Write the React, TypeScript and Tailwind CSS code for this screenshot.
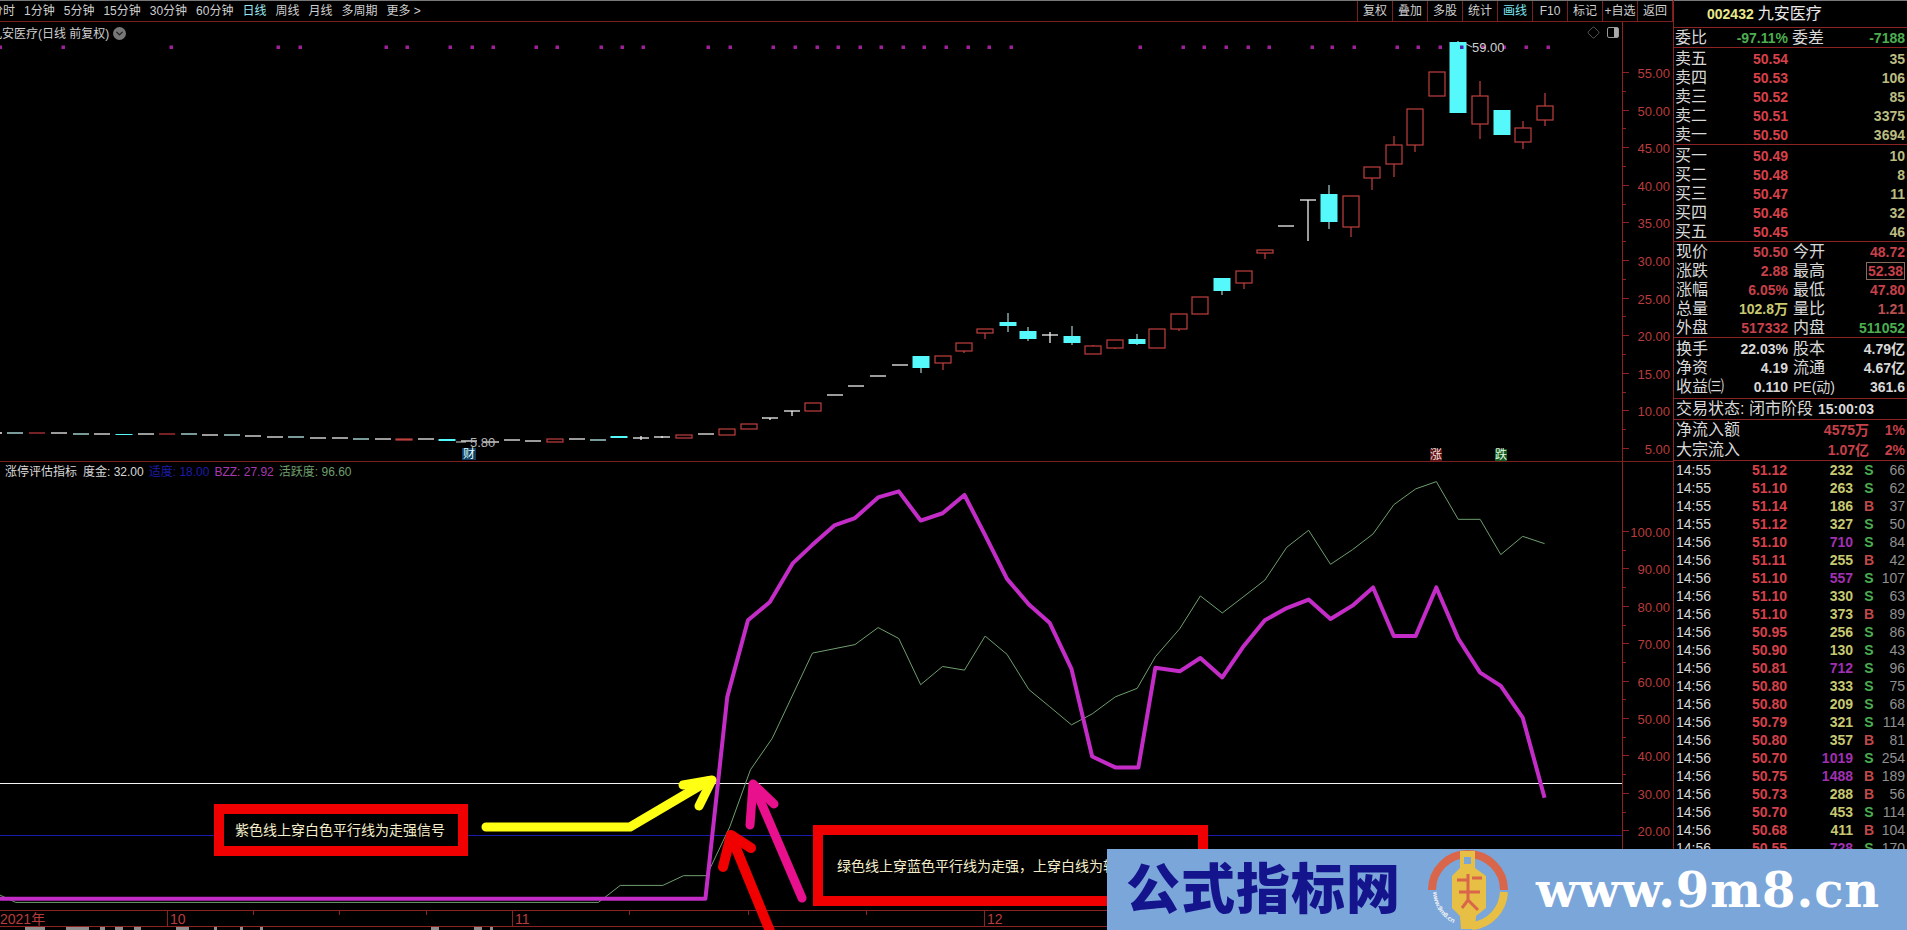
import { ChevronDown, Diamond } from "lucide-react";

const s = 1907 / 1568;

type Candle = [number, number, number, number, number, "r" | "c" | "w"];

const flatCandles: Candle[] = [
  [-6, 433, 433, 433, 433, "w"], [15, 433, 433, 433, 433, "c"], [37, 433, 433, 433, 433, "r"],
  [59, 433, 433, 433, 433, "w"], [81, 434, 434, 434, 434, "c"], [102, 434, 434, 434, 434, "w"],
  [124, 434, 435, 434, 435, "c"], [146, 434, 434, 434, 434, "w"], [167, 434, 434, 434, 434, "r"],
  [189, 434, 434, 434, 434, "c"], [210, 435, 435, 435, 435, "w"], [232, 435, 435, 435, 435, "c"],
  [253, 436, 436, 436, 436, "w"], [275, 437, 437, 437, 437, "w"], [296, 437, 437, 437, 437, "c"],
  [318, 438, 438, 438, 438, "w"], [340, 438, 438, 438, 438, "w"], [361, 439, 439, 439, 439, "c"],
  [383, 439, 439, 439, 439, "w"], [404, 439, 440, 439, 440, "r"], [426, 439, 439, 439, 439, "w"],
  [447, 439, 441, 439, 441, "c"], [469, 441, 441, 441, 441, "w"], [491, 442, 442, 442, 442, "w"],
  [512, 440, 440, 440, 440, "w"], [533, 441, 441, 441, 441, "w"], [555, 439, 442, 439, 442, "r"],
  [577, 439, 439, 439, 439, "w"], [598, 440, 440, 440, 440, "c"], [619, 436, 438, 436, 438, "c"],
  [641, 438, 438, 436, 440, "w"], [662, 437, 437, 436, 438, "w"], [684, 435, 438, 435, 438, "r"],
  [706, 434, 434, 434, 434, "w"], [727, 429, 435, 429, 435, "r"], [749, 424, 429, 424, 429, "r"],
  [770, 418, 418, 418, 420, "w"], [792, 411, 411, 411, 416, "w"], [813, 403, 411, 403, 411, "r"],
  [835, 395, 395, 395, 395, "w"], [856, 386, 386, 386, 386, "w"], [878, 376, 376, 376, 376, "w"],
];

const candles: Candle[] = [
  ...flatCandles,
  [900, 365, 365, 365, 365, "w"],
  [921, 356, 368, 356, 373, "c"],
  [943, 356, 363, 356, 370, "r"],
  [964, 343, 351, 343, 353, "r"],
  [985, 329, 333, 329, 339, "r"],
  [1008, 322, 326, 313, 332, "c"],
  [1028, 331, 339, 327, 341, "c"],
  [1050, 335, 335, 332, 343, "w"],
  [1072, 336, 343, 326, 345, "c"],
  [1093, 346, 354, 345, 354, "r"],
  [1115, 340, 348, 340, 349, "r"],
  [1137, 339, 344, 334, 345, "c"],
  [1157, 329, 348, 329, 348, "r"],
  [1179, 314, 329, 314, 331, "r"],
  [1200, 297, 314, 297, 314, "r"],
  [1222, 278, 291, 278, 295, "c"],
  [1244, 271, 283, 271, 289, "r"],
  [1265, 250, 253, 250, 259, "r"],
  [1286, 226, 226, 226, 226, "w"],
  [1308, 200, 200, 200, 241, "w"],
  [1329, 194, 222, 185, 229, "c"],
  [1351, 196, 227, 196, 237, "r"],
  [1372, 167, 178, 167, 190, "r"],
  [1394, 145, 164, 136, 177, "r"],
  [1415, 109, 145, 109, 152, "r"],
  [1437, 72, 96, 72, 96, "r"],
  [1458, 42, 113, 41, 113, "c"],
  [1480, 96, 124, 81, 139, "r"],
  [1502, 110, 135, 110, 135, "c"],
  [1523, 128, 142, 121, 149, "r"],
  [1545, 106, 120, 93, 126, "r"],
];

const dots = [
  0, 63, 171, 278, 300, 386, 407, 450, 472, 493, 536, 557, 601, 622, 643, 708, 730, 773, 795, 817, 838, 860, 881,
  903, 924, 946, 968, 989, 1011, 1140, 1183, 1204, 1226, 1248, 1269, 1312, 1332, 1354, 1397, 1418, 1440, 1462, 1483,
  1504, 1526, 1548,
];

const purpleLine = [
  [0, 739], [580, 739], [598, 573], [615, 510], [633, 495], [652, 463], [668, 448], [686, 432], [703, 426], [722, 409],
  [739, 404], [757, 428], [775, 422], [793, 407], [810, 440], [828, 476], [846, 497], [863, 512], [881, 550], [898, 622],
  [917, 631], [936, 631], [950, 549], [970, 552], [987, 541], [1005, 557], [1022, 532], [1040, 510], [1058, 500],
  [1076, 493], [1094, 509], [1112, 498], [1129, 483], [1146, 523], [1164, 523], [1181, 483], [1199, 525], [1217, 553],
  [1234, 564], [1252, 590], [1270, 656],
];

const greenLine = [
  [0, 736], [13, 742], [492, 742], [510, 728], [545, 728], [562, 720], [581, 720], [600, 680], [617, 633], [635, 607],
  [668, 537], [703, 530], [722, 516], [739, 525], [757, 563], [775, 548], [793, 551], [810, 523], [828, 538], [846, 567],
  [863, 581], [881, 596], [898, 587], [917, 573], [935, 566], [950, 540], [970, 517], [987, 490], [1005, 504], [1022, 491],
  [1040, 477], [1058, 450], [1076, 436], [1094, 464], [1112, 452], [1129, 439], [1146, 415], [1164, 402], [1181, 396],
  [1199, 427], [1217, 427], [1234, 456], [1252, 441], [1270, 447],
];

const toPoints = (pts: number[][]) => pts.map(([x, y]) => `${x * s},${y * s}`).join(" ");

const priceAxis = [55, 50, 45, 40, 35, 30, 25, 20, 15, 10, 5];
const indicatorAxis = [100, 90, 80, 70, 60, 50, 40, 30, 20];
const dateTicks = [253, 339, 426, 629, 748, 866];
const tabMarks = [
  [25, 20], [66, 23], [100, 5], [115, 8], [134, 7], [176, 13], [214, 3], [240, 3], [260, 3], [431, 8], [474, 8], [490, 3],
];

const toolbarLeft = ["分时", "1分钟", "5分钟", "15分钟", "30分钟", "60分钟", "日线", "周线", "月线", "多周期", "更多 >"];
const toolbarRight = ["复权", "叠加", "多股", "统计", "画线", "F10", "标记", "+自选", "返回"];

const sells = [
  ["卖五", "50.54", "35"],
  ["卖四", "50.53", "106"],
  ["卖三", "50.52", "85"],
  ["卖二", "50.51", "3375"],
  ["卖一", "50.50", "3694"],
];
const buys = [
  ["买一", "50.49", "10"],
  ["买二", "50.48", "8"],
  ["买三", "50.47", "11"],
  ["买四", "50.46", "32"],
  ["买五", "50.45", "46"],
];

const trades: [string, string, string, string, string][] = [
  ["14:55", "51.12", "232", "S", "66"],
  ["14:55", "51.10", "263", "S", "62"],
  ["14:55", "51.14", "186", "B", "37"],
  ["14:55", "51.12", "327", "S", "50"],
  ["14:56", "51.10", "710", "S", "84"],
  ["14:56", "51.11", "255", "B", "42"],
  ["14:56", "51.10", "557", "S", "107"],
  ["14:56", "51.10", "330", "S", "63"],
  ["14:56", "51.10", "373", "B", "89"],
  ["14:56", "50.95", "256", "S", "86"],
  ["14:56", "50.90", "130", "S", "43"],
  ["14:56", "50.81", "712", "S", "96"],
  ["14:56", "50.80", "333", "S", "75"],
  ["14:56", "50.80", "209", "S", "68"],
  ["14:56", "50.79", "321", "S", "114"],
  ["14:56", "50.80", "357", "B", "81"],
  ["14:56", "50.70", "1019", "S", "254"],
  ["14:56", "50.75", "1488", "B", "189"],
  ["14:56", "50.73", "288", "B", "56"],
  ["14:56", "50.70", "453", "S", "114"],
  ["14:56", "50.68", "411", "B", "104"],
  ["14:56", "50.55", "728", "S", "170"],
];

function CandleMark({ c }: { c: Candle }) {
  const [x, top, bottom, high, low, kind] = c;
  if (kind === "w" || top === bottom) {
    const color = kind === "r" ? "#b8323a" : kind === "c" ? "#bdeeee" : "#f0f0f0";
    return (
      <g stroke={color} strokeWidth="1.3">
        <line x1={x - 8} x2={x + 8} y1={top} y2={top} />
        {low > high && <line x1={x} x2={x} y1={high} y2={low} />}
      </g>
    );
  }
  if (kind === "c") {
    return (
      <g>
        <line x1={x} x2={x} y1={high} y2={low} stroke="#c8f8f8" strokeWidth="1" />
        <rect x={x - 8.5} y={top} width="17" height={bottom - top} fill="#55f8fb" />
      </g>
    );
  }
  return (
    <g stroke="#c0403e" strokeWidth="1.2">
      <line x1={x} x2={x} y1={high} y2={top} />
      <line x1={x} x2={x} y1={bottom} y2={low} />
      <rect x={x - 8} y={top} width="16" height={bottom - top} fill="#000" />
    </g>
  );
}

function Axis({ top, height, labels, y0, step, decimals }: { top: number; height: number; labels: number[]; y0: number; step: number; decimals: number }) {
  return (
    <svg width="50" height={height} viewBox={`1622 ${top} 50 ${height}`} className="block">
      {labels.map((v, i) => {
        const y = Math.round(y0 + i * step) + 0.5;
        const half = Math.round(y0 + (i + 0.5) * step) + 0.5;
        return (
          <g key={v}>
            <line x1="1622" x2="1628" y1={y} y2={y} stroke="#8c2222" />
            <line x1="1622" x2="1625" y1={half} y2={half} stroke="#8c2222" />
            <text x="1669" y={y + 5} textAnchor="end" fontSize="13" fill="#b93c3c">
              {v.toFixed(decimals)}
            </text>
          </g>
        );
      })}
    </svg>
  );
}

function QuoteRow({ label, price, vol }: { label: string; price: string; vol: string }) {
  return (
    <div className="flex h-[19px] items-center">
      <div className="flex w-[114px] items-center justify-between pl-[1px]">
        <span className="text-[16px] text-[#d8d8d8]">{label}</span>
        <span className="text-[14px] font-bold text-[#d8404a]">{price}</span>
      </div>
      <span className="flex-1 pr-[2px] text-right text-[14px] font-bold text-[#bcbc80]">{vol}</span>
    </div>
  );
}

function StatRow({ a, b, c, d, bClass, dClass }: { a: React.ReactNode; b: string; c: React.ReactNode; d: React.ReactNode; bClass: string; dClass: string }) {
  return (
    <div className="flex h-[19px] items-center whitespace-nowrap">
      <div className="flex w-[114px] items-center justify-between pl-[2px]">
        <span className="text-[16px] text-[#d8d8d8]">{a}</span>
        <span className={`text-[14px] font-bold ${bClass}`}>{b}</span>
      </div>
      <span className="ml-[5px] text-[16px] text-[#d8d8d8]">{c}</span>
      <span className={`ml-auto pr-[2px] text-right text-[14px] font-bold ${dClass}`}>{d}</span>
    </div>
  );
}

function MoneyRow({ label, amount, pct }: { label: string; amount: string; pct: string }) {
  return (
    <div className="flex h-[20px] items-center whitespace-nowrap pl-[2px]">
      <span className="text-[16px] text-[#d8d8d8]">{label}</span>
      <span className="ml-auto w-[60px] text-right text-[14px] font-bold text-[#c8404a]">{amount}</span>
      <span className="w-[38px] pr-[2px] text-right text-[14px] font-bold text-[#c8404a]">{pct}</span>
    </div>
  );
}

function Logo() {
  return (
    <svg width="80" height="80" viewBox="0 0 80 80" className="block shrink-0">
      <path id="logo-lower" d="M5 42 A35 35 0 0 0 38 76" fill="none" />
      <path d="M4 40 A36 36 0 0 1 76 40" fill="none" stroke="#d9654a" strokeWidth="8" />
      <path d="M76 42 A36 36 0 0 1 44 76" fill="none" stroke="#e8bf45" strokeWidth="8" />
      <polygon points="32,1 47,1 47,18 58,26 58,58 48,66 47,79 33,79 32,66 24,58 24,26 32,18" fill="#e8bf45" />
      <rect x="36" y="7" width="7" height="7" fill="#7ba6d9" />
      <path d="M29 30 H40 M40 24 V50 M31 42 H52 M34 58 L40 50 L50 60 M44 28 H54" stroke="#d9654a" strokeWidth="3" fill="none" />
      <text fontSize="6.5" fill="#f4f4f4" fontWeight="700">
        <textPath href="#logo-lower">www.9m8.cn</textPath>
      </text>
    </svg>
  );
}

export default function App() {
  return (
    <div className="relative h-[930px] w-[1907px] overflow-hidden bg-black font-[Liberation_Sans,Noto_Sans_CJK_SC,sans-serif] text-[12px] leading-none text-[#cfcfcf]">
      <div className="flex h-full">
        {/* chart column */}
        <div className="flex w-[1673px] shrink-0 flex-col">
          {/* toolbar */}
          <div className="flex h-[22px] shrink-0 items-center justify-between overflow-hidden border-t border-b border-t-[#777] border-b-[#7a1f1f]">
            <div className="-ml-[9px] flex gap-[9px] whitespace-nowrap">
              {toolbarLeft.map((t) => (
                <span key={t} className={t === "日线" ? "text-[#9be8f0]" : ""}>
                  {t}
                </span>
              ))}
            </div>
            <div className="flex h-full">
              {toolbarRight.map((t) => (
                <span
                  key={t}
                  className={`flex w-[35px] items-center justify-center border-l border-[#7a1f1f] ${t === "画线" ? "text-[#7fe6f0]" : ""}`}
                >
                  {t}
                </span>
              ))}
              <span className="w-px bg-[#7a1f1f]" />
            </div>
          </div>

          {/* price chart */}
          <div className="flex h-[440px] shrink-0 border-b border-[#7a1f1f]">
            <div className="relative w-[1622px] shrink-0 overflow-hidden">
              <svg width="1622" height="440" viewBox="0 22 1622 440" className="block">
                {dots.map((x) => (
                  <rect key={x} x={x - 1.5} y="45.5" width="3.5" height="3.5" fill="#a0209c" />
                ))}
                {candles.map((c) => (
                  <CandleMark key={c[0]} c={c} />
                ))}
                <line x1="1466" x2="1472" y1="44" y2="47" stroke="#cfcfcf" />
                <line x1="456" x2="466" y1="442" y2="442" stroke="#cfcfcf" />
                <rect x="1460" y="45.5" width="3.5" height="3.5" fill="#5020b0" />
              </svg>
              <div className="absolute left-[14px] top-[5px] flex items-center gap-[4px] whitespace-nowrap">
                <span className="-ml-[24px]">九安医疗(日线 前复权)</span>
                <span className="flex h-[13px] w-[13px] items-center justify-center rounded-full bg-[#777]">
                  <ChevronDown size={11} strokeWidth={3} className="text-[#222]" />
                </span>
              </div>
              <span className="absolute left-[1472px] top-[19px] text-[13px] text-[#cfcfcf]">59.00</span>
              <span className="absolute left-[470px] top-[414px] text-[13px] text-[#b5b5b5]">5.80</span>
              <span className="absolute left-[462px] top-[426px] bg-[#123c60] px-px text-[12px] text-[#dff]">财</span>
              <span className="absolute left-[1430px] top-[427px] bg-[#5a1414] text-[12px] text-[#f4dede]">涨</span>
              <span className="absolute left-[1495px] top-[427px] bg-[#0f5a1e] text-[12px] text-[#e2f6e2]">跌</span>
              <Diamond size={13} strokeWidth={1} className="absolute left-[1587px] top-[4px] text-[#999]" />
              <span className="absolute left-[1607px] top-[5px] flex h-[11px] w-[12px] justify-end rounded-[2px] border border-[#999]">
                <span className="w-[4px] bg-[#aaa]" />
              </span>
            </div>
            <div className="w-[51px] shrink-0 border-l border-[#8c2222]">
              <Axis top={22} height={439} labels={priceAxis} y0={72} step={37.6} decimals={2} />
            </div>
          </div>

          {/* indicator chart */}
          <div className="flex h-[448px] shrink-0">
            <div className="relative w-[1622px] shrink-0 overflow-hidden">
              <svg width="1622" height="448" viewBox="0 462 1622 448" className="block">
                <line x1="0" x2="1622" y1="783.5" y2="783.5" stroke="#f4f4f4" />
                <line x1="0" x2="1622" y1="835.5" y2="835.5" stroke="#1a1aa8" />
                <polyline points={toPoints(greenLine)} fill="none" stroke="#6f9f6f" strokeWidth="1" />
                <polyline points={toPoints(purpleLine)} fill="none" stroke="#c42cc8" strokeWidth="4" strokeLinejoin="round" />
              </svg>
              <div className="absolute left-0 top-[4px] flex gap-[5px] whitespace-nowrap text-[12px]">
                <span className="ml-[5px] text-[#d8d8d8]">涨停评估指标</span>
                <span className="ml-[1px] text-[#d8d8d8]">度金: 32.00</span>
                <span className="text-[#1c1ca8]">适度: 18.00</span>
                <span className="text-[#a838b0]">BZZ: 27.92</span>
                <span className="text-[#6f9f6f]">活跃度: 96.60</span>
              </div>
              <div className="absolute left-[214px] top-[342px] flex h-[52px] w-[254px] items-center border-10 border-[#f00000] bg-black pl-[11px] text-[14px] text-[#f4eecb]">
                紫色线上穿白色平行线为走强信号
              </div>
              <div className="absolute left-[813px] top-[363px] flex h-[81px] w-[395px] items-center whitespace-nowrap border-10 border-[#f00000] bg-black pl-[14px] text-[14px] text-[#f4eecb]">
                绿色线上穿蓝色平行线为走强，上穿白线为转强信号
              </div>
            </div>
            <div className="w-[51px] shrink-0 border-l border-[#8c2222]">
              <Axis top={462} height={448} labels={indicatorAxis} y0={531} step={37.4} decimals={2} />
            </div>
          </div>

          {/* date axis */}
          <div className="relative h-[17px] shrink-0 border-y border-[#8c2222] text-[#b93c3c]">
            <span className="absolute left-0 top-[1px] text-[14px]">2021年</span>
            <span className="absolute left-[167px] top-0 h-full border-l border-[#8c2222] pl-[2px] pt-[1px] text-[14px]">10</span>
            <span className="absolute left-[512px] top-0 h-full border-l border-[#8c2222] pl-[2px] pt-[1px] text-[14px]">11</span>
            <span className="absolute left-[984px] top-0 h-full border-l border-[#8c2222] pl-[2px] pt-[1px] text-[14px]">12</span>
            <svg width="1622" height="4" viewBox="0 0 1622 4" className="absolute left-0 top-0">
              {dateTicks.map((x) => (
                <line key={x} x1={x + 0.5} x2={x + 0.5} y1="0" y2="4" stroke="#8c2222" />
              ))}
            </svg>
          </div>

          {/* tab strip, only its top edge is in frame */}
          <svg width="1107" height="3" viewBox="0 0 1107 3" className="block shrink-0">
            {tabMarks.map(([x, w]) => (
              <rect key={x} x={x} y="0" width={w} height="3" fill="#8f8f8f" />
            ))}
          </svg>
        </div>

        {/* quote panel */}
        <div className="flex h-full min-w-0 flex-1 flex-col border-l border-[#8c2222] whitespace-nowrap">
          <div className="flex h-[28px] shrink-0 items-center border-y border-t-[#777] border-b-[#8c2222] pl-[33px]">
            <span className="text-[14px] font-bold text-[#e8e88c]">002432</span>
            <span className="ml-[4px] text-[16px] text-[#e8e8e8]">九安医疗</span>
          </div>
          <div className="flex h-[20px] shrink-0 items-center border-b border-[#8c2222]">
            <div className="flex w-[114px] items-center justify-between pl-[1px]">
              <span className="text-[16px] text-[#d8d8d8]">委比</span>
              <span className="text-[14px] font-bold text-[#4cae50]">-97.11%</span>
            </div>
            <span className="ml-[4px] text-[16px] text-[#d8d8d8]">委差</span>
            <span className="ml-auto pr-[2px] text-[14px] font-bold text-[#4cae50]">-7188</span>
          </div>
          <div className="flex h-[97px] shrink-0 flex-col border-b border-[#8c2222] pt-[1px]">
            {sells.map((r) => (
              <QuoteRow key={r[0]} label={r[0]} price={r[1]} vol={r[2]} />
            ))}
          </div>
          <div className="flex h-[97px] shrink-0 flex-col border-b border-[#8c2222] pt-[1px]">
            {buys.map((r) => (
              <QuoteRow key={r[0]} label={r[0]} price={r[1]} vol={r[2]} />
            ))}
          </div>
          <div className="flex h-[96px] shrink-0 flex-col border-b border-[#8c2222]">
            <StatRow a="现价" b="50.50" c="今开" d="48.72" bClass="text-[#c8404a]" dClass="text-[#c8404a]" />
            <StatRow
              a="涨跌"
              b="2.88"
              c="最高"
              d={<span className="border border-[#8a6a5a] px-[1px]">52.38</span>}
              bClass="text-[#c8404a]"
              dClass="text-[#c8404a]"
            />
            <StatRow a="涨幅" b="6.05%" c="最低" d="47.80" bClass="text-[#c8404a]" dClass="text-[#c8404a]" />
            <StatRow a="总量" b="102.8万" c="量比" d="1.21" bClass="text-[#c8c870]" dClass="text-[#b85050]" />
            <StatRow a="外盘" b="517332" c="内盘" d="511052" bClass="text-[#c8404a]" dClass="text-[#4cae50]" />
          </div>
          <div className="flex h-[61px] shrink-0 flex-col border-b border-[#8c2222] pt-[1px]">
            <StatRow a="换手" b="22.03%" c="股本" d="4.79亿" bClass="text-[#d8d8d8]" dClass="text-[#d8d8d8]" />
            <StatRow a="净资" b="4.19" c="流通" d="4.67亿" bClass="text-[#d8d8d8]" dClass="text-[#d8d8d8]" />
            <StatRow a="收益㈢" b="0.110" c={<span className="text-[14px]">PE(动)</span>} d="361.6" bClass="text-[#d8d8d8]" dClass="text-[#d8d8d8]" />
          </div>
          <div className="flex h-[21px] shrink-0 items-center border-b border-[#8c2222] pl-[2px]">
            <span className="text-[16px] text-[#d8d8d8]">交易状态: 闭市阶段</span>
            <span className="ml-[5px] text-[14px] font-bold text-[#d8d8d8]">15:00:03</span>
          </div>
          <div className="flex h-[41px] shrink-0 flex-col border-b border-[#8c2222]">
            <MoneyRow label="净流入额" amount="4575万" pct="1%" />
            <MoneyRow label="大宗流入" amount="1.07亿" pct="2%" />
          </div>
          <div className="flex flex-col text-[14px]">
            {trades.map((t, i) => (
              <div key={i} className="grid h-[18px] shrink-0 grid-cols-[78px_36px_65px_32px_20px] items-center">
                <span className="pl-[2px] text-[#d8d8d8]">{t[0]}</span>
                <span className="font-bold text-[#d8404a]">{t[1]}</span>
                <span className={`text-right font-bold ${Number(t[2]) >= 500 ? "text-[#a030b0]" : "text-[#c8c870]"}`}>{t[2]}</span>
                <span className={`text-center font-bold ${t[3] === "S" ? "text-[#4cae50]" : "text-[#c04a4a]"}`}>{t[3]}</span>
                <span className="flex justify-end text-[#909090]">{t[4]}</span>
              </div>
            ))}
          </div>
        </div>
      </div>

      {/* hand-drawn arrows over the screenshot */}
      <svg width="1907" height="930" viewBox="0 0 1907 930" className="pointer-events-none absolute left-0 top-0">
        <g fill="none" stroke="#ffff14" strokeWidth="9" strokeLinecap="round" strokeLinejoin="round">
          <polyline points="486,827 630,827 708,781" />
          <polyline points="683,785 712,780 699,806" />
        </g>
        <g fill="none" stroke="#e8108c" strokeWidth="9" strokeLinecap="round" strokeLinejoin="round">
          <line x1="754" y1="786" x2="802" y2="898" />
          <polyline points="774,804 753,784 750,825" />
        </g>
        <g fill="none" stroke="#f00000" strokeWidth="10" strokeLinecap="round" strokeLinejoin="round">
          <line x1="731" y1="836" x2="772" y2="936" />
          <polyline points="751,848 731,835 723,867" />
        </g>
      </svg>

      {/* watermark banner */}
      <div className="absolute bottom-0 left-[1107px] right-0 flex h-[81px] items-center bg-[#7ba6d9] pl-[19px]">
        <span className="w-[302px] shrink-0 text-[54px] font-black tracking-[1px] text-[#14148c]">公式指标网</span>
        <Logo />
        <span className="ml-[28px] font-['DejaVu_Serif',serif] text-[48px] font-bold tracking-[1px] text-white">www.9m8.cn</span>
      </div>
    </div>
  );
}
